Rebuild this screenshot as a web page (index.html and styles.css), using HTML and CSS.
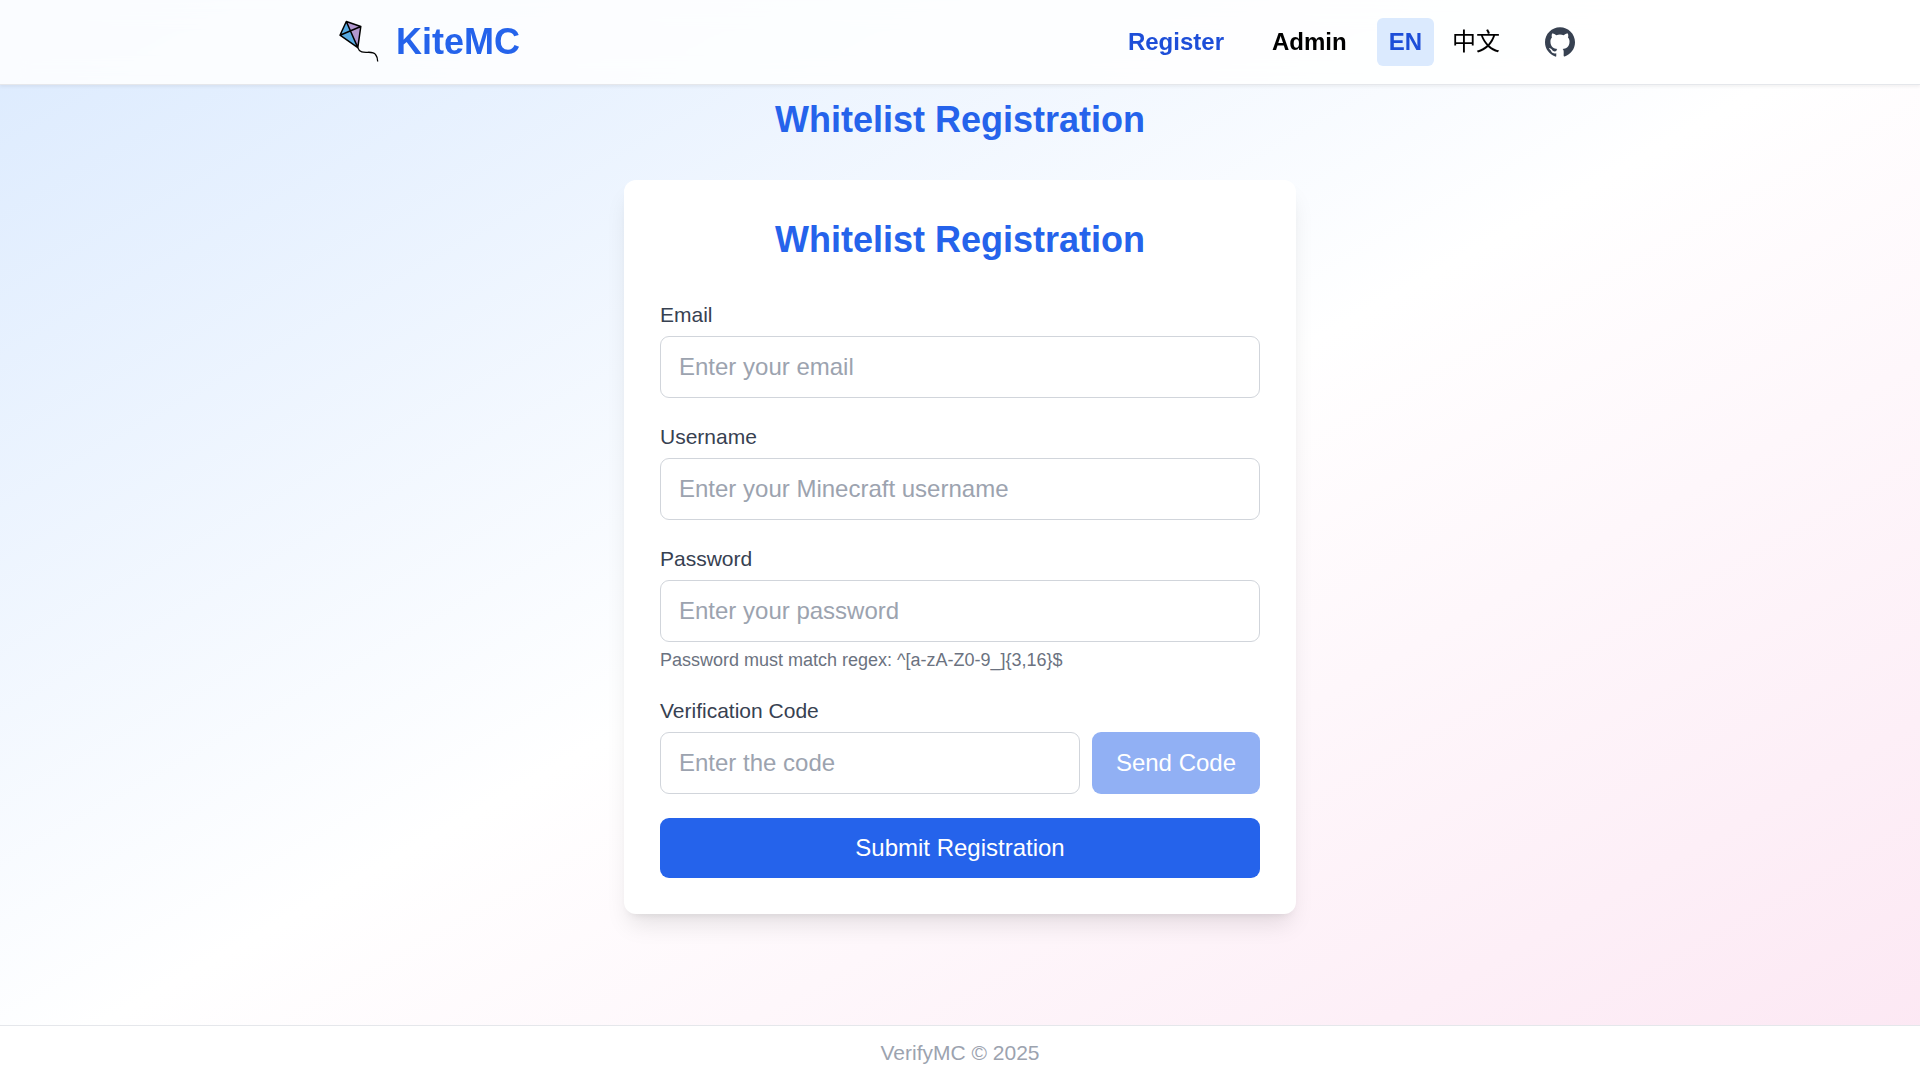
FILE: index.html
```html
<!DOCTYPE html>
<html lang="en">
<head>
  <meta charset="utf-8">
  <meta name="viewport" content="width=device-width, initial-scale=1">
  <title>KiteMC</title>
  <link rel="stylesheet" href="styles.css">
</head>
<body>
  <header class="topbar">
    <div class="topbar-inner">
      <a class="brand" href="#">
        <svg class="brand-logo" viewBox="0 0 48 48" fill="none" aria-hidden="true">
          <path d="M10.3 3.5 4 17.200 21.8 29.6z" fill="#57abe3"/>
          <path d="M10.3 3.5 24.8 8.5 21.8 29.6z" fill="#b197cf"/>
          <path d="M10.3 3.5 24.8 8.5 21.8 29.6 4 17.200zM10.3 3.5 21.8 29.6M4 17.200 24.8 8.5" stroke="#000" stroke-width="1.5" stroke-linejoin="round"/>
          <path d="M21.8 29.6C24.5 38.500 36 31 39.500 36.500C41.600 39 41.700 41 41.700 43.600" stroke="#000" stroke-width="1.3"/>
        </svg>
        <span>KiteMC</span>
      </a>
      <div class="actions">
        <nav class="nav">
          <a class="nav-link nav-link-active" href="#register">Register</a>
          <a class="nav-link" href="#admin">Admin</a>
        </nav>
        <div class="langs">
          <button class="lang lang-active" type="button">EN</button>
          <button class="lang" type="button" lang="zh">中文</button>
        </div>
        <a class="github" href="#github" aria-label="GitHub">
          <svg viewBox="0 0 24 24" fill="currentColor" aria-hidden="true"><path d="M12 .297c-6.63 0-12 5.373-12 12 0 5.303 3.438 9.8 8.205 11.385.6.113.82-.258.82-.577 0-.285-.01-1.04-.015-2.04-3.338.724-4.042-1.61-4.042-1.61C4.422 18.07 3.633 17.7 3.633 17.7c-1.087-.744.084-.729.084-.729 1.205.084 1.838 1.236 1.838 1.236 1.07 1.835 2.809 1.305 3.495.998.108-.776.417-1.305.76-1.605-2.665-.3-5.466-1.332-5.466-5.93 0-1.31.465-2.38 1.235-3.22-.135-.303-.54-1.523.105-3.176 0 0 1.005-.322 3.3 1.23.96-.267 1.98-.399 3-.405 1.02.006 2.04.138 3 .405 2.28-1.552 3.285-1.23 3.285-1.23.645 1.653.24 2.873.12 3.176.765.84 1.23 1.91 1.23 3.22 0 4.61-2.805 5.625-5.475 5.92.42.36.81 1.096.81 2.22 0 1.606-.015 2.896-.015 3.286 0 .315.21.69.825.57C20.565 22.092 24 17.592 24 12.297c0-6.627-5.373-12-12-12"/></svg>
        </a>
      </div>
    </div>
  </header>

  <main class="page">
    <h1 class="title">Whitelist Registration</h1>
    <form class="card">
      <h2 class="title">Whitelist Registration</h2>
      <div class="field">
        <label for="email">Email</label>
        <input id="email" type="email" placeholder="Enter your email">
      </div>
      <div class="field">
        <label for="username">Username</label>
        <input id="username" type="text" placeholder="Enter your Minecraft username">
      </div>
      <div class="field">
        <label for="password">Password</label>
        <input id="password" type="password" placeholder="Enter your password">
        <p class="hint">Password must match regex: ^[a-zA-Z0-9_]{3,16}$</p>
      </div>
      <div class="field">
        <label for="code">Verification Code</label>
        <div class="code-row">
          <input id="code" type="text" placeholder="Enter the code">
          <button class="button" type="button" disabled>Send Code</button>
        </div>
      </div>
      <button class="button" type="submit">Submit Registration</button>
    </form>
  </main>

  <footer class="footer">VerifyMC © 2025</footer>
</body>
</html>
```

FILE: styles.css
```css
*,
*::before,
*::after {
  box-sizing: border-box;
}

body {
  display: flex;
  flex-direction: column;
  min-height: 100vh;
  margin: 0;
  font: 24px/36px "Liberation Sans", Arial, "Noto Sans CJK SC", sans-serif;
  color: #000;
  background: linear-gradient(to bottom right, #dbeafe, #fff, #fce7f3);
}

a {
  color: inherit;
  text-decoration: none;
}

button,
input {
  font: inherit;
}

.topbar {
  position: sticky;
  top: 0;
  z-index: 1;
  background: rgb(255 255 255 / 85%);
  border-bottom: 1px solid #e5e7eb;
  box-shadow: 0 2px 3px rgb(0 0 0 / 5%);
  backdrop-filter: blur(12px);
}

.topbar-inner {
  display: flex;
  align-items: center;
  justify-content: space-between;
  max-width: 1344px;
  min-height: 84px;
  margin: 0 auto;
  padding: 0 48px;
}

.brand {
  display: flex;
  align-items: center;
  gap: 12px;
  font-size: 36px;
  font-weight: 700;
  color: #2563eb;
}

.brand-logo {
  width: 48px;
  height: 48px;
}

.actions,
.nav,
.langs {
  display: flex;
  align-items: center;
}

.actions {
  gap: 18px;
}

.nav {
  gap: 24px;
}

.langs {
  gap: 6px;
}

.nav-link {
  padding: 6px 12px;
  font-weight: 700;
}

.nav-link-active {
  color: #1d4ed8;
}

.lang {
  padding: 6px 12px;
  border: 0;
  border-radius: 6px;
  background: none;
  color: #000;
  cursor: pointer;
}

.lang-active {
  background: #dbeafe;
  color: #1d4ed8;
  font-weight: 700;
}

.github {
  display: flex;
  margin-left: 6px;
  padding: 9px;
  color: #374151;
}

.github svg {
  width: 30px;
  height: 30px;
}

.page {
  display: flex;
  flex: 1;
  flex-direction: column;
  align-items: center;
  gap: 36px;
  padding: 11px 24px 48px;
}

.title {
  margin: 0;
  font-size: 36px;
  line-height: 48px;
  font-weight: 700;
  text-align: center;
  color: #2563eb;
}

.card {
  display: flex;
  flex-direction: column;
  gap: 24px;
  width: 100%;
  max-width: 672px;
  padding: 36px;
  border-radius: 12px;
  background: #fff;
  box-shadow: 0 15px 23px -5px rgb(0 0 0 / 10%), 0 6px 9px -6px rgb(0 0 0 / 10%);
}

.card .title {
  margin-bottom: 12px;
}

.field {
  display: flex;
  flex-direction: column;
  gap: 6px;
}

.field label {
  font-size: 21px;
  line-height: 30px;
  color: #374151;
}

.field input {
  width: 100%;
  min-width: 0;
  height: 62px;
  padding: 12px 18px;
  border: 1px solid #d1d5db;
  border-radius: 9px;
  background: #fff;
  color: #000;
}

.field input::placeholder {
  color: #9ca3af;
}

.hint {
  margin: 0;
  font-size: 18px;
  line-height: 24px;
  color: #6b7280;
}

.code-row {
  display: flex;
  gap: 12px;
}

.button {
  flex: none;
  padding: 12px 24px;
  border: 0;
  border-radius: 9px;
  background: #2563eb;
  color: #fff;
  cursor: pointer;
}

.button:disabled {
  opacity: 0.5;
  cursor: not-allowed;
}

.footer {
  padding: 12px;
  border-top: 1px solid #e5e7eb;
  background: #fff;
  font-size: 21px;
  line-height: 30px;
  text-align: center;
  color: #9ca3af;
}
```
